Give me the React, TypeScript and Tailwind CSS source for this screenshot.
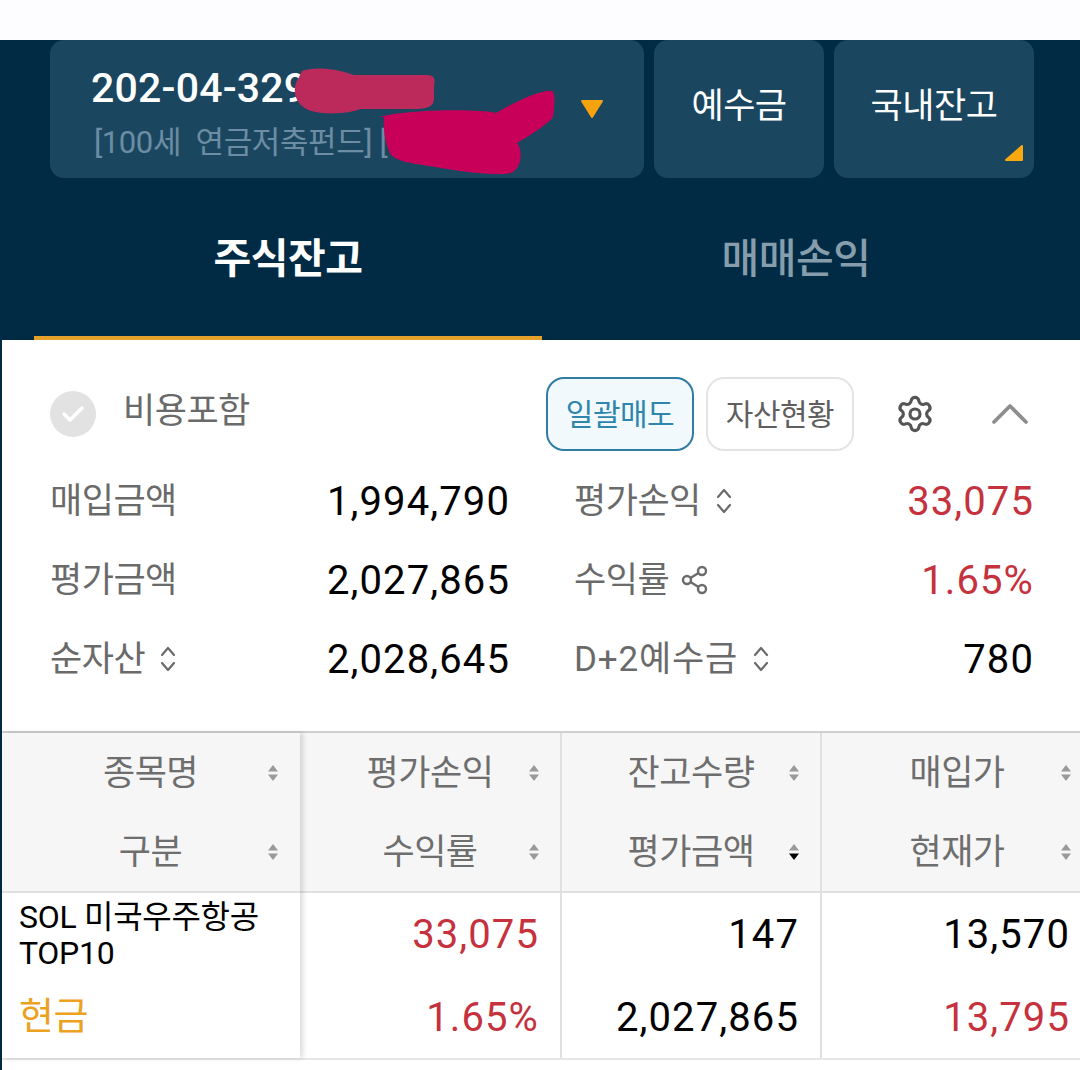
import { Settings, ChevronUp } from "lucide-react";

const FONT = "[font-family:Roboto,'Noto_Sans_CJK_KR',sans-serif]";

function UpDown() {
  return (
    <svg width="18" height="28" viewBox="0 0 18 28" fill="none" stroke="#6b6b6b" strokeWidth="2.2" strokeLinecap="round" strokeLinejoin="round">
      <path d="M3 10 9 3l6 7" />
      <path d="M3 18l6 7 6-7" />
    </svg>
  );
}

function ShareMark() {
  return (
    <svg className="-ml-[2px]" width="28" height="32" viewBox="0 0 28 32" fill="none" stroke="#6b6b6b" strokeWidth="2.4">
      <circle cx="21" cy="7" r="4" />
      <circle cx="6" cy="16" r="4" />
      <circle cx="21" cy="25" r="4" />
      <path d="M9.5 14 17.5 9M9.5 18l8 5" />
    </svg>
  );
}

function SortArrows({ active = false }: { active?: boolean }) {
  return (
    <svg className="shrink-0" width="12" height="20" viewBox="0 0 12 20">
      <path d="M6 2 11 8.5H1Z" fill="#9a9a9a" />
      <path d="M6 18 11 11.5H1Z" fill={active ? "#000000" : "#9a9a9a"} />
    </svg>
  );
}

function SummaryRow({
  label,
  icon,
  value,
  red = false,
  wide = false,
}: {
  label: string;
  icon?: React.ReactNode;
  value: string;
  red?: boolean;
  wide?: boolean;
}) {
  return (
    <div className="flex h-[79px] items-center justify-between">
      <div className="flex items-center gap-[14px] text-[35px] tracking-[-0.5px] text-[#6a6a6a]">
        <span className={`mt-[4px] ${wide ? "tracking-[0.8px]" : ""}`}>{label}</span>
        {icon}
      </div>
      <span className={`-mr-[1px] mt-[2px] text-[40px] tracking-[1.1px] ${red ? "text-[#c5323d]" : "text-black"}`}>{value}</span>
    </div>
  );
}

function HeadCell({ label, active = false, pad }: { label: string; active?: boolean; pad: string }) {
  return (
    <div className={`flex h-[79px] items-center pl-[32px] ${pad} text-[35px] tracking-[-0.5px] text-[#6e6e6e]`}>
      <span className="mt-[3px] flex-1 text-center">{label}</span>
      <SortArrows active={active} />
    </div>
  );
}

export default function App() {
  const columns = [
    { top: "평가손익", bottom: "수익률", topVal: "33,075", botVal: "1.65%", topRed: true, botRed: true, pad: "pr-[20px]", valPad: "pr-[21px]" },
    { top: "잔고수량", bottom: "평가금액", topVal: "147", botVal: "2,027,865", topRed: false, botRed: false, active: true, pad: "pr-[20px]", valPad: "pr-[21px]" },
    { top: "매입가", bottom: "현재가", topVal: "13,570", botVal: "13,795", topRed: false, botRed: true, pad: "pr-[8px]", valPad: "pr-[10px]" },
  ];

  return (
    <div className={`relative h-[1070px] w-[1080px] overflow-hidden bg-white ${FONT}`}>
      <div className="h-[40px] bg-[#fdfdff]" />

      {/* 계좌 헤더 */}
      <div className="h-[300px] bg-[#012b44]">
        <div className="flex gap-[10px] pl-[50px]">
          <div className="relative flex h-[138px] w-[594px] items-center justify-between rounded-[14px] bg-[#1b465f] pl-[41px] pr-[40px]">
            <div className="pt-[5px]">
              <div className="text-[41px] font-medium leading-[52px] tracking-[0.2px] text-white">202-04-329</div>
              <div className="ml-[3px] mt-[11px] text-[31px] leading-[36px] tracking-[-0.4px] text-[#6c8da3]">
                [100세&nbsp; 연금저축펀드] [
              </div>
            </div>
            <svg width="24" height="20" viewBox="0 0 24 20">
              <path d="M2 2h20L12 18Z" fill="#f7a30f" stroke="#f7a30f" strokeWidth="2" strokeLinejoin="round" />
            </svg>
            {/* 가림 표시 */}
            <svg className="absolute left-[240px] top-[25px]" width="270" height="115" viewBox="0 0 270 115">
              <path d="M12 6c20-6 40 0 52 4h72c12 0 8 8 8 14v10c0 8-8 10-20 10H70c-8 4-30 6-44 3C8 44 2 30 6 18Z" fill="#bc2a5b" />
              <path d="M90 52c30-8 100-8 116-4 24-14 48-24 56-22 4 2 2 18 1 26-4 6-22 18-36 26 6 6 5 26-6 30-20 4-64-4-88-8-14-2-26-4-32-10-6-12-8-26-7-38Z" fill="#c8005a" />
            </svg>
          </div>
          <div className="flex h-[138px] w-[170px] items-center justify-center rounded-[14px] bg-[#1b465f] pb-[3px] text-[35px] tracking-[-0.5px] text-white">
            예수금
          </div>
          <div className="relative flex h-[138px] w-[200px] items-center justify-center rounded-[14px] bg-[#1b465f] pb-[3px] text-[35px] tracking-[-0.5px] text-white">
            국내잔고
            <svg className="absolute bottom-[16px] right-[10px]" width="20" height="18" viewBox="0 0 20 18">
              <path d="M18 2v14H2Z" fill="#f9a80f" stroke="#f9a80f" strokeWidth="2" strokeLinejoin="round" />
            </svg>
          </div>
        </div>

        <div className="mx-[34px] flex h-[162px] w-[1016px]">
          <div className="flex w-[508px] items-center justify-center border-b-[4px] border-[#e5a12a] pt-[6px] text-[41px] font-bold tracking-[-0.5px] text-white">
            주식잔고
          </div>
          <div className="flex w-[508px] items-center justify-center pb-[4px] pt-[6px] text-[41px] font-medium tracking-[-0.5px] text-[#869eac]">
            매매손익
          </div>
        </div>
      </div>

      <div className="h-[730px] border-l-[2px] border-[#012b44]">
        {/* 요약 */}
        <div className="h-[391px]">
          <div className="flex h-[110px] items-center pl-[48px] pr-[38px] pt-[38px]">
            <div className="flex flex-1 items-center gap-[27px] text-[35px] tracking-[-0.5px] text-[#6a6a6a]">
              <span className="flex h-[46px] w-[46px] items-center justify-center rounded-full bg-[#e2e2e2]">
                <svg width="24" height="20" viewBox="0 0 24 20" fill="none" stroke="#ffffff" strokeWidth="3.4" strokeLinecap="round" strokeLinejoin="round">
                  <path d="M3 10l6 6L21 4" />
                </svg>
              </span>
              <span className="-mt-[4px]">비용포함</span>
            </div>
            <button className="flex h-[74px] w-[148px] items-center justify-center rounded-[18px] border-2 border-[#2f7da3] bg-[#f2f9fd] text-[30px] tracking-[-0.5px] text-[#2f86ad]">
              일괄매도
            </button>
            <button className="ml-[12px] flex h-[74px] w-[148px] items-center justify-center rounded-[18px] border-2 border-[#e4e4e4] bg-white text-[30px] tracking-[-0.5px] text-[#5f5f5f]">
              자산현황
            </button>
            <Settings className="ml-[41px]" size={40} strokeWidth={1.9} color="#555555" />
            <ChevronUp className="ml-[43px]" size={64} strokeWidth={1.4} color="#8e8e8e" />
          </div>

          <div className="mt-[11px] flex">
            <div className="ml-[48px] w-[459px]">
              <SummaryRow label="매입금액" value="1,994,790" />
              <SummaryRow label="평가금액" value="2,027,865" />
              <SummaryRow label="순자산" icon={<UpDown />} value="2,028,645" />
            </div>
            <div className="ml-[65px] w-[459px]">
              <SummaryRow label="평가손익" icon={<UpDown />} value="33,075" red />
              <SummaryRow label="수익률" icon={<ShareMark />} value="1.65%" red />
              <SummaryRow label="D+2예수금" icon={<UpDown />} value="780" wide />
            </div>
          </div>
        </div>

        {/* 잔고 테이블 */}
        <div className="flex border-y-2 border-t-[#cfcfcf] border-b-[#e6e6e6]">
          <div className="relative z-10 w-[298px] shadow-[3px_0_5px_rgba(0,0,0,0.14)]">
            <div className="border-b-2 border-[#e0e0e0] bg-[#f6f6f6]">
              <HeadCell label="종목명" pad="pr-[21px]" />
              <HeadCell label="구분" pad="pr-[21px]" />
            </div>
            <div className="h-[165px] pl-[17px]">
              <div className="pt-[6px] text-[32px] leading-[36px] tracking-[-0.3px] text-black">
                SOL 미국우주항공
                <br />
                TOP10
              </div>
              <div className="mt-[20px] text-[38px] leading-[50px] tracking-[-0.5px] text-[#eba21f]">현금</div>
            </div>
          </div>

          {columns.map((c, i) => (
            <div key={c.top} className={`w-[260px] ${i > 0 ? "border-l-2 border-[#e0e0e0]" : ""}`}>
              <div className="border-b-2 border-[#e0e0e0] bg-[#f6f6f6]">
                <HeadCell label={c.top} pad={c.pad} />
                <HeadCell label={c.bottom} active={c.active} pad={c.pad} />
              </div>
              <div className={`h-[165px] ${c.valPad} pt-[1px] text-right text-[40px] tracking-[1.1px]`}>
                <div className={`h-[82px] leading-[82px] ${c.topRed ? "text-[#c5323d]" : "text-black"}`}>{c.topVal}</div>
                <div className={`h-[82px] leading-[84px] ${c.botRed ? "text-[#c5323d]" : "text-black"}`}>{c.botVal}</div>
              </div>
            </div>
          ))}
        </div>
      </div>
    </div>
  );
}
